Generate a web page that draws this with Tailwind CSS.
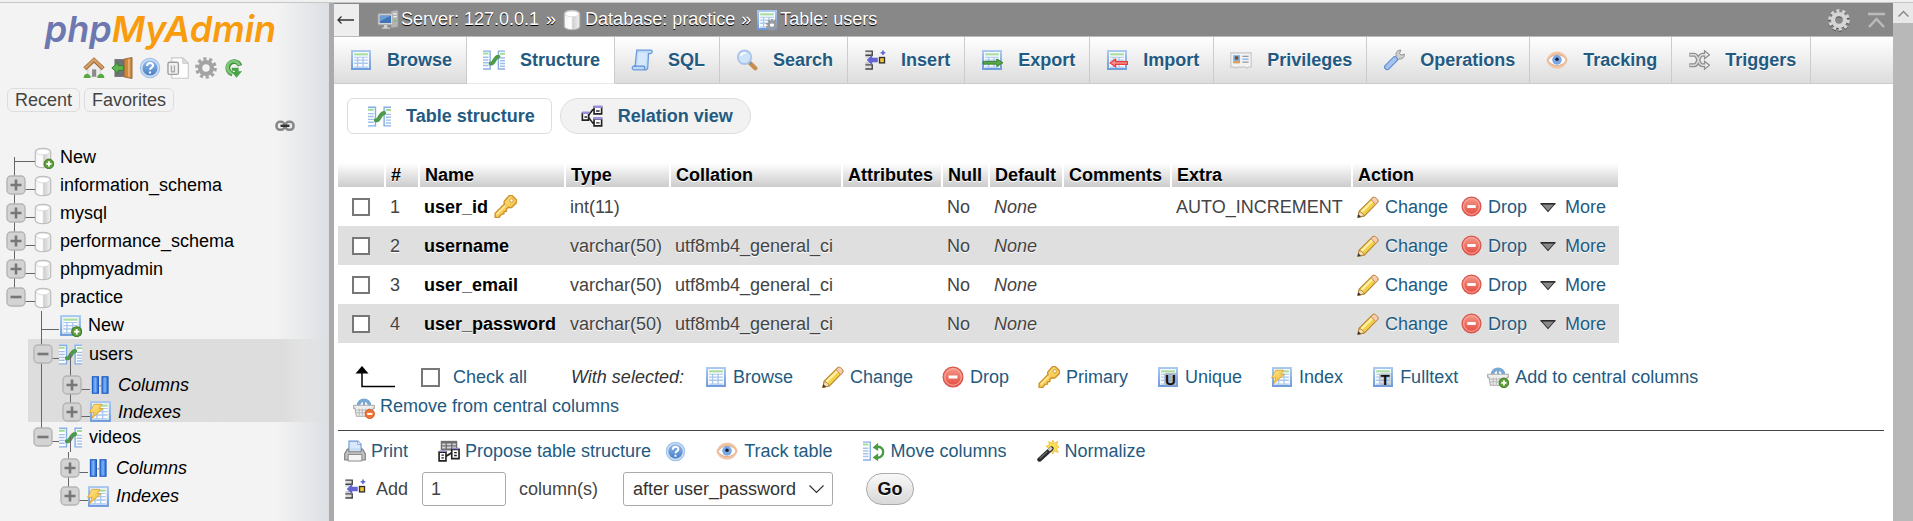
<!DOCTYPE html>
<html lang="en">
<head>
<meta charset="utf-8">
<title>127.0.0.1 / practice / users | phpMyAdmin</title>
<script src="https://cdn.jsdelivr.net/npm/@tailwindcss/browser@4"></script>
</head>
<body class="flex min-h-screen flex-col bg-white font-['Liberation_Sans',Arial,sans-serif] text-[18px] leading-6 text-[#444]">
<svg class="absolute size-0" aria-hidden="true">
  <defs>
    <linearGradient id="g-blue" x1="0" y1="0" x2="0" y2="1"><stop offset="0" stop-color="#a9c8ee"/><stop offset="1" stop-color="#6d9bdc"/></linearGradient>
    <linearGradient id="g-cyl" x1="0" y1="0" x2="1" y2="0"><stop offset="0" stop-color="#f4f4f4"/><stop offset=".45" stop-color="#fff"/><stop offset=".55" stop-color="#cfcfcf"/><stop offset="1" stop-color="#f2f2f2"/></linearGradient>
    <linearGradient id="g-col" x1="0" y1="0" x2="1" y2="0"><stop offset="0" stop-color="#2f78e0"/><stop offset=".5" stop-color="#7db4f7"/><stop offset="1" stop-color="#1f5fd0"/></linearGradient>
    <linearGradient id="g-red" x1="0" y1="0" x2="0" y2="1"><stop offset="0" stop-color="#f59a8c"/><stop offset="1" stop-color="#e4493f"/></linearGradient>
    <linearGradient id="g-gold" x1="0" y1="0" x2="1" y2="1"><stop offset="0" stop-color="#ffe98c"/><stop offset="1" stop-color="#eeb52e"/></linearGradient>
    <linearGradient id="g-help" x1="0" y1="0" x2="0" y2="1"><stop offset="0" stop-color="#8db9ea"/><stop offset="1" stop-color="#4a7fc6"/></linearGradient>
    <symbol id="i-table" viewBox="0 0 16 16">
      <rect x="1.500" y="1.500" width="13" height="13" fill="#fff" stroke="url(#g-blue)" stroke-width="1.500"/>
      <path d="M3 3.900h10" stroke="#a6dc9c" stroke-width="1.500"/>
      <path d="M3 5.600h10v8H3z" fill="#a9c7ee"/>
      <path d="M3 6.300h2v1.300H3zM6 6.300h3v1.300H6zM10 6.300h3v1.300h-3zM3 8.600h2v1.300H3zM6 8.600h3v1.300H6zM10 8.600h3v1.300h-3zM3 10.900h2v1.800H3zM6 10.900h3v1.800H6zM10 10.900h3v1.800h-3z" fill="#fff"/>
    </symbol>
    <symbol id="i-plusdot" viewBox="0 0 16 16"><circle cx="12.3" cy="12.3" r="3.5" fill="#5d9f38" stroke="#3c7a1e" stroke-width=".7"/><path d="M12.3 10.4v3.8M10.4 12.3h3.8" stroke="#fff" stroke-width="1.3"/></symbol>
    <symbol id="i-tablenew" viewBox="0 0 16 16"><use href="#i-table"/><use href="#i-plusdot"/></symbol>
    <symbol id="i-db" viewBox="0 0 16 16">
      <path d="M2.4 3.4v9.4c0 1.2 2.5 2.3 5.6 2.3s5.6-1.1 5.6-2.3V3.4C13.6 2 11 1 8 1S2.4 2 2.4 3.4z" fill="url(#g-cyl)" stroke="#b8b8b8" stroke-width=".8"/>
      <ellipse cx="8" cy="3.6" rx="5" ry="2.1" fill="#fff" stroke="#d5d5d5" stroke-width=".6"/>
    </symbol>
    <symbol id="i-dbnew" viewBox="0 0 16 16"><use href="#i-db"/><use href="#i-plusdot"/></symbol>
    <symbol id="i-structure" viewBox="0 0 16 16">
      <path d="M0 1h5.5v13.5H0z" fill="#fff"/><path d="M0 1.5h5.2v13H0" fill="none" stroke="#86aee6"/>
      <path d="M0 6h4M0 8h4M0 10h4M0 12h4" stroke="#9fbfea"/><path d="M0 3.3h4" stroke="#9edb95" stroke-width="1.400"/>
      <path d="M11 1h5v13.5h-5z" fill="#fff"/><path d="M16 1.5h-4.8v13H16" fill="none" stroke="#86aee6"/>
      <path d="M12.4 6.5H16M12.4 8.5H16M12.4 10.5H16M12.4 12.5H16" stroke="#9fbfea"/><path d="M12.4 3.5H16" stroke="#9edb95" stroke-width="1.4"/>
      <path d="M5.500 10.600h.8c1.600 0 2.200-5 4.900-5" fill="none" stroke="#4c9a4a" stroke-width="2.900" stroke-linecap="round"/>
    </symbol>
    <symbol id="i-columns" viewBox="0 0 16 16"><rect x="1" y="2" width="4.400" height="12" fill="url(#g-col)" stroke="#1d5bc4" stroke-width=".8"/><rect x="8" y="2" width="4.400" height="12" fill="url(#g-col)" stroke="#1d5bc4" stroke-width=".8"/><path d="M6.200 8.500h1" stroke="#888"/></symbol>
    <symbol id="i-bolt" viewBox="0 0 16 16"><path d="M3.500 3h5.500L7.200 6H9.800L2 12.800 3.600 8.600H.4z" fill="url(#g-gold)" stroke="#d9a232" stroke-width=".6"/></symbol>
    <symbol id="i-index" viewBox="0 0 16 16"><use href="#i-table"/><use href="#i-bolt"/></symbol>
    <symbol id="i-unique" viewBox="0 0 16 16"><use href="#i-table"/><path d="M6 5h8v9.500H6z" fill="#9aa4b4" opacity=".7"/><text x="5.800" y="13.600" font-size="11" font-weight="700" fill="#111" font-family="Liberation Sans">U</text></symbol>
    <symbol id="i-fulltext" viewBox="0 0 16 16"><use href="#i-table"/><path d="M6 5h8v9.500H6z" fill="#9aa4b4" opacity=".4"/><text x="6.200" y="13.800" font-size="11" font-weight="700" fill="#111" font-family="Liberation Sans">T</text></symbol>
    <symbol id="i-gear" viewBox="0 0 16 16">
      <circle cx="8" cy="8" r="6.700" fill="none" stroke="currentColor" stroke-width="2.400" stroke-dasharray="2.300 1.908"/>
      <circle cx="8" cy="8" r="4.300" fill="none" stroke="currentColor" stroke-width="3.200"/>
    </symbol>
    <symbol id="i-tableprops" viewBox="0 0 16 16"><use href="#i-table"/><g color="#999" transform="translate(7 7) scale(.58)"><use href="#i-gear" width="16" height="16"/></g></symbol>
    <symbol id="i-home" viewBox="0 0 16 16"><path d="M3.500 7L8 3l4.500 4v7.300h-9z" fill="#ededed" stroke="#bbb" stroke-width=".5"/><path d="M6.600 9h3v5.300h-3z" fill="#8b8b8b"/><path d="M1.300 8.600L8 2.200l6.700 6.400" fill="none" stroke="#9c6430" stroke-width="3"/><path d="M1.500 8.300L8 2l6.500 6.300" fill="none" stroke="#d7a066" stroke-width="1.700"/><path d="M.5 14.800c.2-2.800 3.600-3.800 5-.6v1H.5zM15.500 14.800c-.2-2.800-3.600-3.800-5-.6v1h5z" fill="#58a941"/></symbol>
    <symbol id="i-exit" viewBox="0 0 16 16"><path d="M2.500 1.500H11v13H2.500z" fill="#6f7378"/><path d="M9.500 1.500L15.300.4v15.200L9.500 14.500z" fill="#c98841" stroke="#94602b" stroke-width=".6"/><path d="M13 1.500v13" stroke="#e7b271" stroke-width="1.400"/><path d="M.6 8l4.600-4v2.300h4v3.400h-4V12z" fill="#5db550" stroke="#367f30" stroke-width=".7"/></symbol>
    <symbol id="i-help" viewBox="0 0 16 16"><circle cx="8" cy="8" r="7" fill="#cfe0f5" stroke="#a5c3e8" stroke-width=".9"/><circle cx="8" cy="8" r="5.500" fill="url(#g-help)"/><path d="M5.900 6.600c0-3 4.300-2.800 4.300-.4C10.200 7.700 8 7.700 8 9.300M8 10.500v1.500" fill="none" stroke="#fff" stroke-width="1.500"/></symbol>
    <symbol id="i-docs" viewBox="0 0 16 16"><path d="M3.500.6h8l4 4v10.800h-12z" fill="#fdfdfd" stroke="#c9c9c9" stroke-width=".8"/><path d="M11.500.6v4h4z" fill="#ddd" stroke="#c4c4c4" stroke-width=".6"/><rect x=".7" y="3.800" width="7.600" height="8.800" rx="1.200" fill="#f1f1f1" stroke="#9f9f9f"/><path d="M3.200 6.200v4.500M5.400 6.200v4.500M3 10.700h2.800" stroke="#aaa"/></symbol>
    <symbol id="i-reload" viewBox="0 0 16 16"><path d="M13.600 6.200A5 5 0 1 0 7.500 12.700" fill="none" stroke="#3f8f3d" stroke-width="3.800"/><path d="M13.200 5.800A5 5 0 1 0 7.300 12.400" fill="none" stroke="#7cc876" stroke-width="2.200"/><path d="M7 7.800h5.500v2.700h2.700L10.800 15.800 7 11.200h2.400v-1H7z" fill="#4ba247"/></symbol>
    <symbol id="i-link" viewBox="0 0 20 12"><rect x="1.500" y="1.800" width="8" height="8" rx="3.500" fill="none" stroke="#888" stroke-width="2.600"/><rect x="10.500" y="1.800" width="8" height="8" rx="3.500" fill="none" stroke="#888" stroke-width="2.600"/><path d="M5.500 5.800h9" stroke="#333" stroke-width="2.400"/></symbol>
    <symbol id="i-server" viewBox="0 0 16 16"><path d="M10 1.500l4.500-1 1 .8v11.800l-4 .8H10z" fill="#b4b4b4" stroke="#8b8b8b" stroke-width=".6"/><path d="M11.500 3.500h3M11.500 5.500h3" stroke="#eee"/><circle cx="13.300" cy="8.500" r=".8" fill="#5fd04a"/><rect x=".8" y="3.500" width="10.600" height="8" rx=".8" fill="#d8d8d8" stroke="#a5a5a5" stroke-width=".6"/><rect x="2" y="4.800" width="8.200" height="5.400" fill="#3f74b8"/><path d="M2 4.800h8.200L2 9z" fill="#6d9bd2"/><path d="M5 11.700h2.500v1.700H9.500v1H3.500v-1H5z" fill="#d0d0d0"/></symbol>
    <symbol id="i-sql" viewBox="0 0 16 16"><path d="M4.200.8h10.400c1.200.2 1.200 2.300-.3 2.500h-1.500l-.6 9.800c0 1.500-.6 2-1.600 2H2c-1.500 0-1.500-2.500 0-2.600h1z" fill="#bdd8f6" stroke="#6b9bdb" stroke-width=".9"/><path d="M5.200 2.500h6.500l-.7 9.700H4.600z" fill="#d6e8fb"/><path d="M2 12.500h7.200c1 .2.900 2 .3 2.600" fill="none" stroke="#5f8fd2" stroke-width=".9"/></symbol>
    <symbol id="i-search" viewBox="0 0 16 16"><path d="M10 10l4 4" stroke="#c98f52" stroke-width="3.200" stroke-linecap="round"/><path d="M9.800 9.800l1.200 1.200" stroke="#8d8d8d" stroke-width="2"/><circle cx="6.200" cy="6" r="4.900" fill="#cfe3f8" stroke="#a8c6ea" stroke-width="1.300"/><path d="M3.500 5c.5-1.500 2-2.300 3.500-1.900" fill="none" stroke="#fff" stroke-width="1.200"/></symbol>
    <symbol id="i-insert" viewBox="0 0 16 16"><path d="M1 1.500h5v3H1M1 11.500h5v3H1" fill="#ddd" stroke="#444"/><path d="M1 5.700h3M1 10.200h3" stroke="#bbb"/><path d="M2 8l4-4v2.400h4v3.200H6V12z" fill="#6265cf"/><rect x="11.300" y="6.200" width="3.600" height="3.900" fill="#f8c537" stroke="#333"/><path d="M13.800 1v3.400M12.100 2.700h3.400" stroke="#6265cf" stroke-width="1.200"/></symbol>
    <symbol id="i-export" viewBox="0 0 16 16"><use href="#i-table"/><path d="M1.500 9h10V7.200L15.900 10l-4.400 2.800V11h-10z" fill="#5aa648" stroke="#2e7d2a" stroke-width=".7"/></symbol>
    <symbol id="i-import" viewBox="0 0 16 16"><use href="#i-table"/><path d="M15.700 9.200H7V7.400L3 10.200 7 13v-1.800h8.700z" fill="#f58f8f" stroke="#ea3b3b" stroke-width=".9"/></symbol>
    <symbol id="i-priv" viewBox="0 0 16 16"><path d="M.6 2.800h14.800v10.400h-2l-1 .8-1-.8H5l-1 .8-1-.8H.6z" fill="#f2f2f2" stroke="#c6c6c6" stroke-width=".8"/><rect x="2.300" y="4.500" width="5" height="5.800" fill="#77b0ee"/><circle cx="4.800" cy="6.500" r="1.400" fill="#8a4d27"/><path d="M2.800 10.300c.3-2.600 3.700-2.600 4 0z" fill="#ef9d3e"/><path d="M9 5.300h4.500M9 9.500h4.500" stroke="#999" stroke-width=".9"/><path d="M9 7.400h4.500" stroke="#77b0ee" stroke-width=".9"/></symbol>
    <symbol id="i-wrench" viewBox="0 0 16 16"><path d="M8.300 7.200L9.600 5C8.900 2.500 10.500.7 13 .8l-1 2.400 1.200 1.300 2.300-.8c.2 2.300-1.500 3.900-3.900 3.500L9.800 8.700z" fill="#cfcfcf" stroke="#8d8d8d" stroke-width=".7"/><path d="M3 13.200L8.600 7.500" stroke="#5a86cf" stroke-width="4.400" stroke-linecap="round"/><path d="M3 13.200L8.600 7.500" stroke="#a5c2f0" stroke-width="3" stroke-linecap="round"/></symbol>
    <symbol id="i-eye" viewBox="0 0 16 16"><path d="M.3 8.300C1.500 3.800 5 2 8.300 2s6.200 1.800 7.400 5.800c-1 4.100-3.900 6.400-7.500 6.400S1.500 12.200.3 8.300z" fill="#f0c4a4"/><path d="M1.500 8.300C3.300 5.200 5.500 4.300 8.200 4.300s5 1 6.500 3.700c-1.500 2.800-3.900 4-6.500 4S3.100 11 1.500 8.300z" fill="#fff" stroke="#dba884" stroke-width=".7"/><circle cx="8" cy="7.900" r="3.500" fill="#7aa7e4"/><circle cx="8" cy="7.500" r="1.300" fill="#16233c"/></symbol>
    <symbol id="i-triggers" viewBox="0 0 16 16"><path d="M1 4.200h3.500c3.500 0 2.500 7.600 6 7.600H13M1 11.800h3.500c3.500 0 2.500-7.600 6-7.600H13" fill="none" stroke="#8f8f8f" stroke-width="3"/><path d="M12 1.300l3.600 2.900L12 7.100zM12 8.900l3.600 2.900-3.600 2.900z" fill="#eee" stroke="#8f8f8f" stroke-width=".9"/><path d="M1.500 4.200h3c3.500 0 2.500 7.600 6 7.600H13M1.500 11.800h3c3.500 0 2.500-7.600 6-7.600H13" fill="none" stroke="#ddd" stroke-width="1"/></symbol>
    <symbol id="i-relation" viewBox="0 0 16 16"><path d="M5.500 7.500L8.500 3.500M5.500 9l3 4M8 3.500h1.500M8 13h1.500" fill="none" stroke="#222" stroke-width="1.200"/><g fill="#fff" stroke="#222" stroke-width="1.200"><path d="M1 6h4.500v5H1z"/><path d="M9.500 1.500H15v5H9.500z"/><path d="M9.500 10.200H15v5H9.500z"/></g><path d="M1 5.700h5M9 1.200h6.500M9 9.700h6.500" stroke="#9a8fd8" stroke-width="1.800"/><path d="M2.500 8.700h2M11 4.400h2.500M11 13h2.500" stroke="#222"/></symbol>
    <symbol id="i-key" viewBox="0 0 16 16"><path d="M10.200.9c.9-.8 2-.8 2.900 0l2.100 2c.8.900.8 2 0 2.900l-2.500 2.500c-.8.700-1.800.8-2.700.2L8.600 9.900l.1 1.400-1.700.3-.2 1.600-1.700.2-1.600 2.200H.8v-2.900L7.300 6.200c-.5-.9-.4-1.800.4-2.600z" fill="url(#g-gold)" stroke="#d0922f" stroke-width="1"/><circle cx="12.200" cy="3.800" r="1.200" fill="#fff" stroke="#d08f2b" stroke-width=".6"/><path d="M2 13.300l5.600-5.600" stroke="#fff3b0" stroke-width=".8"/></symbol>
    <symbol id="i-pencil" viewBox="0 0 16 16"><path d="M.6 15.600l1-4.600L11.300 1.300c1.200-1.200 4.900 1.900 3.700 3.400L5.400 14.500z" fill="#f3d04a" stroke="#b98833" stroke-width=".8"/><path d="M3.200 11.600L12 2.900" stroke="#fff2a8" stroke-width="1.600"/><path d="M10.200 2.600L11.800 1c1.300-.8 4.100 1.700 3.300 3.500L13.500 6.200z" fill="#f5cdb0" stroke="#c78a55" stroke-width=".7"/><path d="M.6 15.600l1-4.300c1.500.2 3.200 1.600 3.700 3.100z" fill="#f6dcb0" stroke="#a8782c" stroke-width=".6"/><path d="M.5 15.700l.5-2.400 1.900 1.700z" fill="#333"/></symbol>
    <symbol id="i-drop" viewBox="0 0 16 16"><circle cx="8" cy="8" r="7.200" fill="url(#g-red)" stroke="#d8574c" stroke-width=".9"/><circle cx="8" cy="8" r="6" fill="none" stroke="#f9b3a8" stroke-width=".7"/><path d="M4.800 8h6.400" stroke="#fff" stroke-width="2.200"/></symbol>
    <symbol id="i-more" viewBox="0 0 16 16"><path d="M1 4.500h14L8 13z" fill="#888"/><path d="M.5 4.800h15" stroke="#222" stroke-width="1.500"/><path d="M1.300 5l6.700 7.500L14.700 5" fill="none" stroke="#333" stroke-width="1.100"/></symbol>
    <symbol id="i-basket" viewBox="0 0 16 16"><path d="M4 6.500c0-5.500 8-5.500 8 0" fill="none" stroke="#7aa8d4" stroke-width="2.600"/><path d="M8 2v5" stroke="#7aa8d4" stroke-width="1.500"/><path d="M.5 6h15v2.300h-.9L13.500 14h-11L1.400 8.300H.5z" fill="#eee" stroke="#aaa" stroke-width=".8"/><path d="M2 9.500h12M2.500 11.500h11M4.500 8.500v5M6.800 8.500v5M9.200 8.500v5M11.500 8.500v5" stroke="#b5b5b5" stroke-width=".7"/></symbol>
    <symbol id="i-basketadd" viewBox="0 0 16 16"><use href="#i-basket"/><use href="#i-plusdot"/></symbol>
    <symbol id="i-basketdel" viewBox="0 0 16 16"><use href="#i-basket"/><circle cx="12.200" cy="12.300" r="3.400" fill="#ef7435" stroke="#c9521d" stroke-width=".6"/><path d="M10.300 12.300h3.800" stroke="#fff" stroke-width="1.400"/></symbol>
    <symbol id="i-print" viewBox="0 0 16 16"><path d="M3.600 7.500V.8h6.600l2.200 2.200v4.500z" fill="#d9e9fb" stroke="#6b98d6" stroke-width=".8"/><path d="M10 .8V3.200h2.400" fill="#fff" stroke="#6b98d6" stroke-width=".6"/><path d="M2.500 6.500h1v2h9v-2h1l2 3.500v4.500H.5V10z" fill="#c2c2c2" stroke="#7d7d7d" stroke-width=".8"/><path d="M4 6h8v2H4z" fill="#c4dcf8"/><path d="M3 10.500h10v4.800H3z" fill="#f4f4f4" stroke="#777" stroke-width=".6"/></symbol>
    <symbol id="i-propose" viewBox="0 0 16 16"><path d="M2 .6h12v7H2z" fill="#707070"/><path d="M3 2.500h2.500v1.300H3zM6.500 2.500h3v1.300h-3zM10.500 2.500H13v1.300h-2.500zM3 4.800h2.500v1.300H3zM6.500 4.800h3v1.300h-3zM10.500 4.800H13v1.300h-2.500z" fill="#d5d5d5"/><path d="M5.500 12l5-3" stroke="#222" stroke-width="1.300"/><g fill="#fff" stroke="#222" stroke-width="1.200"><path d="M.8 8.800h5v6.400h-5z"/><path d="M10 6.800h5.300v6.700H10z"/></g><path d="M1 8.200h5M10 6.200h5.500" stroke="#8f88c9"/><path d="M2.500 11h1.800M2.500 13h1.800M11.700 9.200h2M11.700 11.300h2" stroke="#222"/></symbol>
    <symbol id="i-move" viewBox="0 0 16 16"><path d="M0 1h5.500v13.800H0z" fill="#fff"/><path d="M0 1.500h5.300v13H0" fill="none" stroke="#86aee6"/><path d="M0 3.300h4" stroke="#9edb95" stroke-width="1.300"/><path d="M0 6h4M0 8h4M0 10h4M0 12h4" stroke="#a9c5ee"/><path d="M9 5.200c7.500-2 7.500 8.500.5 7.700" fill="none" stroke="#4a9a46" stroke-width="1.700"/><path d="M7 5.500L11 2v6zM7 12.700l4-3v5.800z" fill="#4a9a46"/></symbol>
    <symbol id="i-wand" viewBox="0 0 16 16"><path d="M11.500 0l1 2.500L15 1l-.8 3 1.800 1-1.800 1.500L15.500 9 12.500 8l-1 2.200-1.200-2.300L7.500 8.500l1-2.500L6.500 4.500 9 3.800 8.500 1l2.300 1.500z" fill="#fbe04f" stroke="#eab52c" stroke-width=".5"/><path d="M1.800 14.200L10.500 6.200" stroke="#2c2c2c" stroke-width="3.200" stroke-linecap="round"/><path d="M8.500 7.500l2.200-2" stroke="#ccc" stroke-width="2.200"/><path d="M2 13.400l5.500-5" stroke="#777" stroke-width=".8"/></symbol>
    <symbol id="i-plus" viewBox="0 0 20 20"><rect x="1" y="1" width="18" height="18" rx="4" fill="#d3d3d3" stroke="#b5b5b5" stroke-width="1.400"/><path d="M4.500 10h11M10 4.500v11" stroke="#777" stroke-width="2.600"/></symbol>
    <symbol id="i-minus" viewBox="0 0 20 20"><rect x="1" y="1" width="18" height="18" rx="4" fill="#d3d3d3" stroke="#b5b5b5" stroke-width="1.400"/><path d="M4.500 10h11" stroke="#777" stroke-width="2.600"/></symbol>
    <symbol id="i-arrow" viewBox="0 0 40 22"><path d="M7 6v14.500h33" fill="none" stroke="#000" stroke-width="1.500"/><path d="M.5 7.500L7 0l6.500 7.500z" fill="#000"/></symbol>
  </defs>
</svg>

<div class="h-[3px] border-b border-[#c6c6c6] bg-[#f0f0f0]"></div>
<div class="flex flex-1">
  <!-- Navigation panel -->
  <nav class="w-[334px] shrink-0 border-r-[5px] border-[#aaa] bg-[linear-gradient(to_right,#f3f3f3_84%,#dcdfe3)] text-black">
    <a href="#" class="mt-1 flex h-11 items-center justify-center pr-2 font-[Inter,sans-serif] text-[36px] leading-10 font-semibold text-[#f89c0e] italic"><span class="text-[#6c78af]">php</span>MyAdmin</a>
    <div class="mt-1 flex h-[26px] items-center gap-[6px] pl-[83px]">
      <a href="#" aria-label="Home"><svg class="size-[22px]"><use href="#i-home"/></svg></a>
      <a href="#" aria-label="Log out"><svg class="size-[22px]"><use href="#i-exit"/></svg></a>
      <a href="#" aria-label="phpMyAdmin documentation"><svg class="size-[22px]"><use href="#i-help"/></svg></a>
      <a href="#" aria-label="Documentation"><svg class="size-[22px]"><use href="#i-docs"/></svg></a>
      <a href="#" aria-label="Navigation panel settings" class="text-[#a3a3a3]"><svg class="size-[22px]"><use href="#i-gear"/></svg></a>
      <a href="#" aria-label="Reload navigation panel"><svg class="size-5"><use href="#i-reload"/></svg></a>
    </div>
    <div class="mt-[7px] flex gap-1 pl-[7px] text-[#444]">
      <button class="h-6 rounded-md border border-[#ddd] px-[7px] leading-5">Recent</button>
      <button class="h-6 rounded-md border border-[#ddd] px-[7px] leading-5">Favorites</button>
    </div>
    <div class="mt-2 flex h-3 justify-end pr-[34px]"><button aria-label="Unlink from main panel"><svg class="h-3 w-5"><use href="#i-link"/></svg></button></div>
    <ul id="tree" class="mt-[11px] leading-5"></ul>
  </nav>

  <!-- Main panel -->
  <main class="min-w-0 flex-1">
    <header class="flex h-[34px] items-center border-b border-[#bbb] bg-[#888] text-white [text-shadow:0_1px_0_#000]">
      <button aria-label="Hide panel" class="flex h-8 w-[25px] items-center justify-center bg-[#eee] pr-1"><svg class="h-3 w-[18px]" viewBox="0 0 18 12" fill="none" stroke="#333" stroke-width="1.300"><path d="M18 6H2M5.500 2.500L2 6l3.500 3.500"/></svg></button>
      <div class="flex flex-1 items-center pb-[2px] pl-[18px] whitespace-pre">
        <svg class="mt-[2px] mr-[2px] size-[22px]"><use href="#i-server"/></svg><a href="#">Server: 127.0.0.1</a><span class="pl-[7px]">»</span>
        <svg class="mt-[2px] mr-[2px] ml-[5px] size-[22px]"><use href="#i-db"/></svg><a href="#">Database: practice</a><span class="pl-[6px]">»</span>
        <svg class="mt-[2px] mr-[2px] ml-[5px] size-[22px]"><use href="#i-tableprops"/></svg><a href="#">Table: users</a>
      </div>
      <button aria-label="Page-related settings" class="text-[#d5d5d5] drop-shadow-[0_1px_0_#555]"><svg class="size-[22px]"><use href="#i-gear"/></svg></button>
      <button aria-label="Back to top" class="mr-2 ml-[18px]"><svg class="h-4 w-[17px]" viewBox="0 0 17 16" fill="none" stroke="#bbb" stroke-width="2.500"><path d="M0 2h17M1 15l7.500-8L16 15"/></svg></button>
    </header>
    <div id="tabs" class="flex bg-linear-to-b from-white to-[#dcdcdc] font-bold text-[#235a81] [text-shadow:0_1px_0_#fff]"></div>

    <div class="flex gap-2 px-[13px] pt-[14px] font-bold text-[#235a81]">
      <a href="#" class="flex h-9 items-center gap-[15px] rounded-md border border-[#ddd] pr-4 pl-5"><svg class="size-[23px]"><use href="#i-structure"/></svg>Table structure</a>
      <a href="#" class="flex h-9 items-center gap-[15px] rounded-full border border-[#ddd] bg-[#f2f2f2] pr-[17px] pl-5"><svg class="size-[22px]"><use href="#i-relation"/></svg>Relation view</a>
    </div>

    <div class="pr-[9px] pl-1">
      <table class="mt-[29px] table-fixed text-left">
        <colgroup><col class="w-[47px]"><col class="w-[34px]"><col class="w-[146px]"><col class="w-[105px]"><col class="w-[172px]"><col class="w-[100px]"><col class="w-[47px]"><col class="w-[74px]"><col class="w-[108px]"><col class="w-[181px]"><col class="w-[267px]"></colgroup>
        <thead class="text-black [text-shadow:0_1px_0_#fff] [&_th]:h-6 [&_th]:border-r-2 [&_th]:border-white [&_th]:bg-linear-to-b [&_th]:from-white [&_th]:to-[#ccc] [&_th]:p-0 [&_th]:pl-[5px]">
          <tr><th aria-label="Select"></th><th>#</th><th>Name</th><th>Type</th><th>Collation</th><th>Attributes</th><th>Null</th><th>Default</th><th>Comments</th><th>Extra</th><th>Action</th></tr>
        </thead>
        <tbody id="rows" class="[text-shadow:0_1px_0_#fff] [&_td]:h-[39px] [&_td]:p-0 [&_td]:pl-[5px] [&_td]:whitespace-nowrap [&_tr]:even:bg-[#dfdfdf]"></tbody>
      </table>

      <div class="mt-[22px] flex flex-wrap items-center text-[#235a81]">
        <svg class="mr-[26px] ml-[17px] h-[22px] w-10"><use href="#i-arrow"/></svg>
        <input id="all" type="checkbox" class="size-[19px] appearance-none border-2 border-[#777] bg-white">
        <label for="all" class="ml-[13px]">Check all</label>
        <i class="mr-[21px] ml-[44px] text-[#333]">With selected:</i>
        <div id="bulk" class="flex items-center gap-[29px]"></div>
      </div>
      <a href="#" class="mt-1 flex w-fit items-center gap-[5px] pl-[15px] text-[#235a81]"><svg class="mt-1 size-[22px]"><use href="#i-basketdel"/></svg>Remove from central columns</a>
      <hr class="mt-[11px] border-[#444]">
      <div class="mt-2 flex items-center pl-[6px] text-[#235a81]">
        <a href="#" class="flex items-center gap-[5px]"><svg class="size-[22px]"><use href="#i-print"/></svg>Print</a>
        <a href="#" class="ml-[30px] flex items-center gap-[5px]"><svg class="size-[22px]"><use href="#i-propose"/></svg>Propose table structure</a>
        <a href="#" aria-label="Documentation" class="ml-[14px]"><svg class="size-[21px]"><use href="#i-help"/></svg></a>
        <a href="#" class="ml-[30px] flex items-center gap-[6px]"><svg class="size-[22px]"><use href="#i-eye"/></svg>Track table</a>
        <a href="#" class="ml-[30px] flex items-center gap-[6px]"><svg class="size-[22px]"><use href="#i-move"/></svg>Move columns</a>
        <a href="#" class="ml-[30px] flex items-center gap-[6px]"><svg class="size-[22px]"><use href="#i-wand"/></svg>Normalize</a>
      </div>
      <form class="mt-[9px] flex items-center pl-[6px]">
        <svg class="mr-[10px] size-[22px]"><use href="#i-insert"/></svg>
        <label for="num">Add</label>
        <input id="num" type="text" value="1" class="ml-[14px] h-[34px] w-[84px] rounded-[3px] border border-[#aaa] bg-white px-2">
        <label for="after" class="ml-[13px]">column(s)</label>
        <div class="relative ml-[25px]">
          <select id="after" class="h-[34px] w-[210px] appearance-none rounded-[3px] border border-[#aaa] bg-white pl-[9px] text-[#333]"><option>after user_password</option></select>
          <svg class="pointer-events-none absolute top-3 right-[9px] h-[10px] w-[15px]" viewBox="0 0 15 10" fill="none" stroke="#333" stroke-width="1.200"><path d="M.5 1.500l7 7 7-7"/></svg>
        </div>
        <button type="button" class="ml-[33px] h-8 w-12 rounded-full border border-[#aaa] bg-linear-to-b from-[#f8f8f8] to-[#d8d8d8] font-bold text-[#111] [text-shadow:0_1px_0_#fff]">Go</button>
      </form>
    </div>
  </main>

  <!-- Scroll track -->
  <div class="w-5 shrink-0 bg-[#b8b8b8]">
    <div class="flex h-5 items-center justify-center bg-[#e8e8e8]"><svg class="h-[7px] w-[11px]" viewBox="0 0 11 7" fill="none" stroke="#888" stroke-width="1.500"><path d="M.5 6.500l5-5 5 5"/></svg></div>
  </div>
</div>

<script>
const svg = (id, cls) => `<svg class="${cls}"><use href="#i-${id}"/></svg>`;

// Gutter widths and line positions for each depth of the database tree
const levels = {
  a: { pad: 'pl-[6px]', gut: 'w-[29px]' },
  b: { pad: 'pl-[33px]', gut: 'w-[26px]' },
  c: { pad: 'pl-[62px]', gut: 'w-[28px]' },
  d: { pad: 'pl-[60px]', gut: 'w-[28px]' },
};
const spans = { full: 'inset-y-0', top: 'top-0 bottom-1/2', bottom: 'top-1/2 bottom-0' };
function row(level, icon, label, toggle, span, height, through) {
  const l = levels[level];
  const italic = level === 'c' || level === 'd' ? 'italic' : '';
  return `<li class="relative flex items-center ${height} ${l.pad}">
    ${through ? '<span class="absolute inset-y-0 left-[41px] w-px bg-[#666]"></span>' : ''}
    <span class="relative flex h-full items-center ${l.gut}">
      <span class="absolute left-2 ${spans[span]} w-px bg-[#666]"></span>
      <span class="absolute top-1/2 right-0 left-2 mt-1 h-px bg-[#666]"></span>
      ${toggle ? `<button aria-label="Expand/Collapse" class="relative flex size-5">${svg(toggle, 'size-5')}</button>` : ''}
    </span>
    <a href="#" class="flex items-center whitespace-nowrap ${italic}">${icon}${label}</a></li>`;
}
const db = svg('db', '-ml-[3px] mt-[2px] size-[22px] mr-[6px]');
const st = svg('structure', 'mr-[7px] size-[23px]');
const co = svg('columns', 'ml-[1px] mr-[5px] size-[22px]');
const ix = svg('index', 'mr-[6px] -ml-[1px] size-[23px]');
const under = '<span class="absolute left-[70px] top-1/2 bottom-0 w-px bg-[#666]"></span>';
document.getElementById('tree').innerHTML =
  row('a', svg('dbnew', '-ml-[3px] mr-[6px] mt-[2px] size-[22px]'), 'New', '', 'bottom', 'h-7') +
  row('a', db, 'information_schema', 'plus', 'full', 'h-7') +
  row('a', db, 'mysql', 'plus', 'full', 'h-7') +
  row('a', db, 'performance_schema', 'plus', 'full', 'h-7') +
  row('a', db, 'phpmyadmin', 'plus', 'full', 'h-7') +
  row('a', db, 'practice', 'minus', 'top', 'h-7') +
  row('b', svg('tablenew', 'mr-[6px] size-[23px]'), 'New', '', 'full', 'h-7') +
  '<li><ul class="ml-7 bg-linear-to-r from-[#ddd] from-85% to-transparent *:-ml-7">' +
  row('b', st, 'users' + under, 'minus', 'full', 'h-[30px]') +
  row('c', co, 'Columns', 'plus', 'full', 'h-8', true) +
  row('c', ix, 'Indexes', 'plus', 'top', 'h-[21px]', true) + '</ul></li>' +
  row('b', st, 'videos' + under, 'minus', 'top', 'h-[30px]') +
  row('d', co, 'Columns', 'plus', 'full', 'h-8') +
  row('d', ix, 'Indexes', 'plus', 'top', 'h-6');

const tabs = [['table', 'Browse'], ['structure', 'Structure'], ['sql', 'SQL'], ['search', 'Search'], ['insert', 'Insert'], ['export', 'Export'], ['import', 'Import'], ['priv', 'Privileges'], ['wrench', 'Operations'], ['eye', 'Tracking'], ['triggers', 'Triggers']];
document.getElementById('tabs').innerHTML = tabs.map(([i, t]) =>
  `<a href="#" class="flex h-[47px] items-center gap-[15px] border-r border-b border-r-[#ccc] pr-[14px] pl-4 ${t === 'Structure' ? 'border-b-[#e8e8e8] bg-white' : 'border-b-[#ccc]'}">${svg(i, 'size-[22px]')}${t}</a>`).join('') +
  '<span class="flex-1 border-b border-[#ccc]"></span>';

const cols = [['user_id', 'int(11)', '', 'AUTO_INCREMENT'], ['username', 'varchar(50)', 'utf8mb4_general_ci', ''], ['user_email', 'varchar(50)', 'utf8mb4_general_ci', ''], ['user_password', 'varchar(50)', 'utf8mb4_general_ci', '']];
document.getElementById('rows').innerHTML = cols.map(([n, t, c, x], k) => `<tr>
  <td><input type="checkbox" id="c${k}" aria-label="${n}" class="ml-[9px] block size-[18px] appearance-none border-2 border-[#777] bg-white"></td>
  <td>${k + 1}</td>
  <td><label for="c${k}" class="flex items-center gap-1 font-bold text-black">${n}${k ? '' : svg('key', 'ml-[2px] size-[23px]')}</label></td>
  <td>${t}</td><td>${c}</td><td></td><td>No</td><td><i>None</i></td><td></td><td>${x}</td>
  <td><div class="flex items-center gap-[13px] text-[#235a81]">
    <a href="#" class="flex items-center gap-[6px]">${svg('pencil', 'size-[22px]')}Change</a>
    <a href="#" class="flex items-center gap-[6px]">${svg('drop', 'size-[21px]')}Drop</a>
    <a href="#" class="flex items-center gap-[9px]">${svg('more', 'size-4')}More</a></div></td></tr>`).join('');

const bulk = [['table', 'Browse'], ['pencil', 'Change'], ['drop', 'Drop'], ['key', 'Primary'], ['unique', 'Unique'], ['index', 'Index'], ['fulltext', 'Fulltext'], ['basketadd', 'Add to central columns']];
document.getElementById('bulk').innerHTML = bulk.map(([i, t]) =>
  `<button class="flex items-center gap-[6px]">${svg(i, 'size-[22px]')}${t}</button>`).join('');
</script>
</body>
</html>
